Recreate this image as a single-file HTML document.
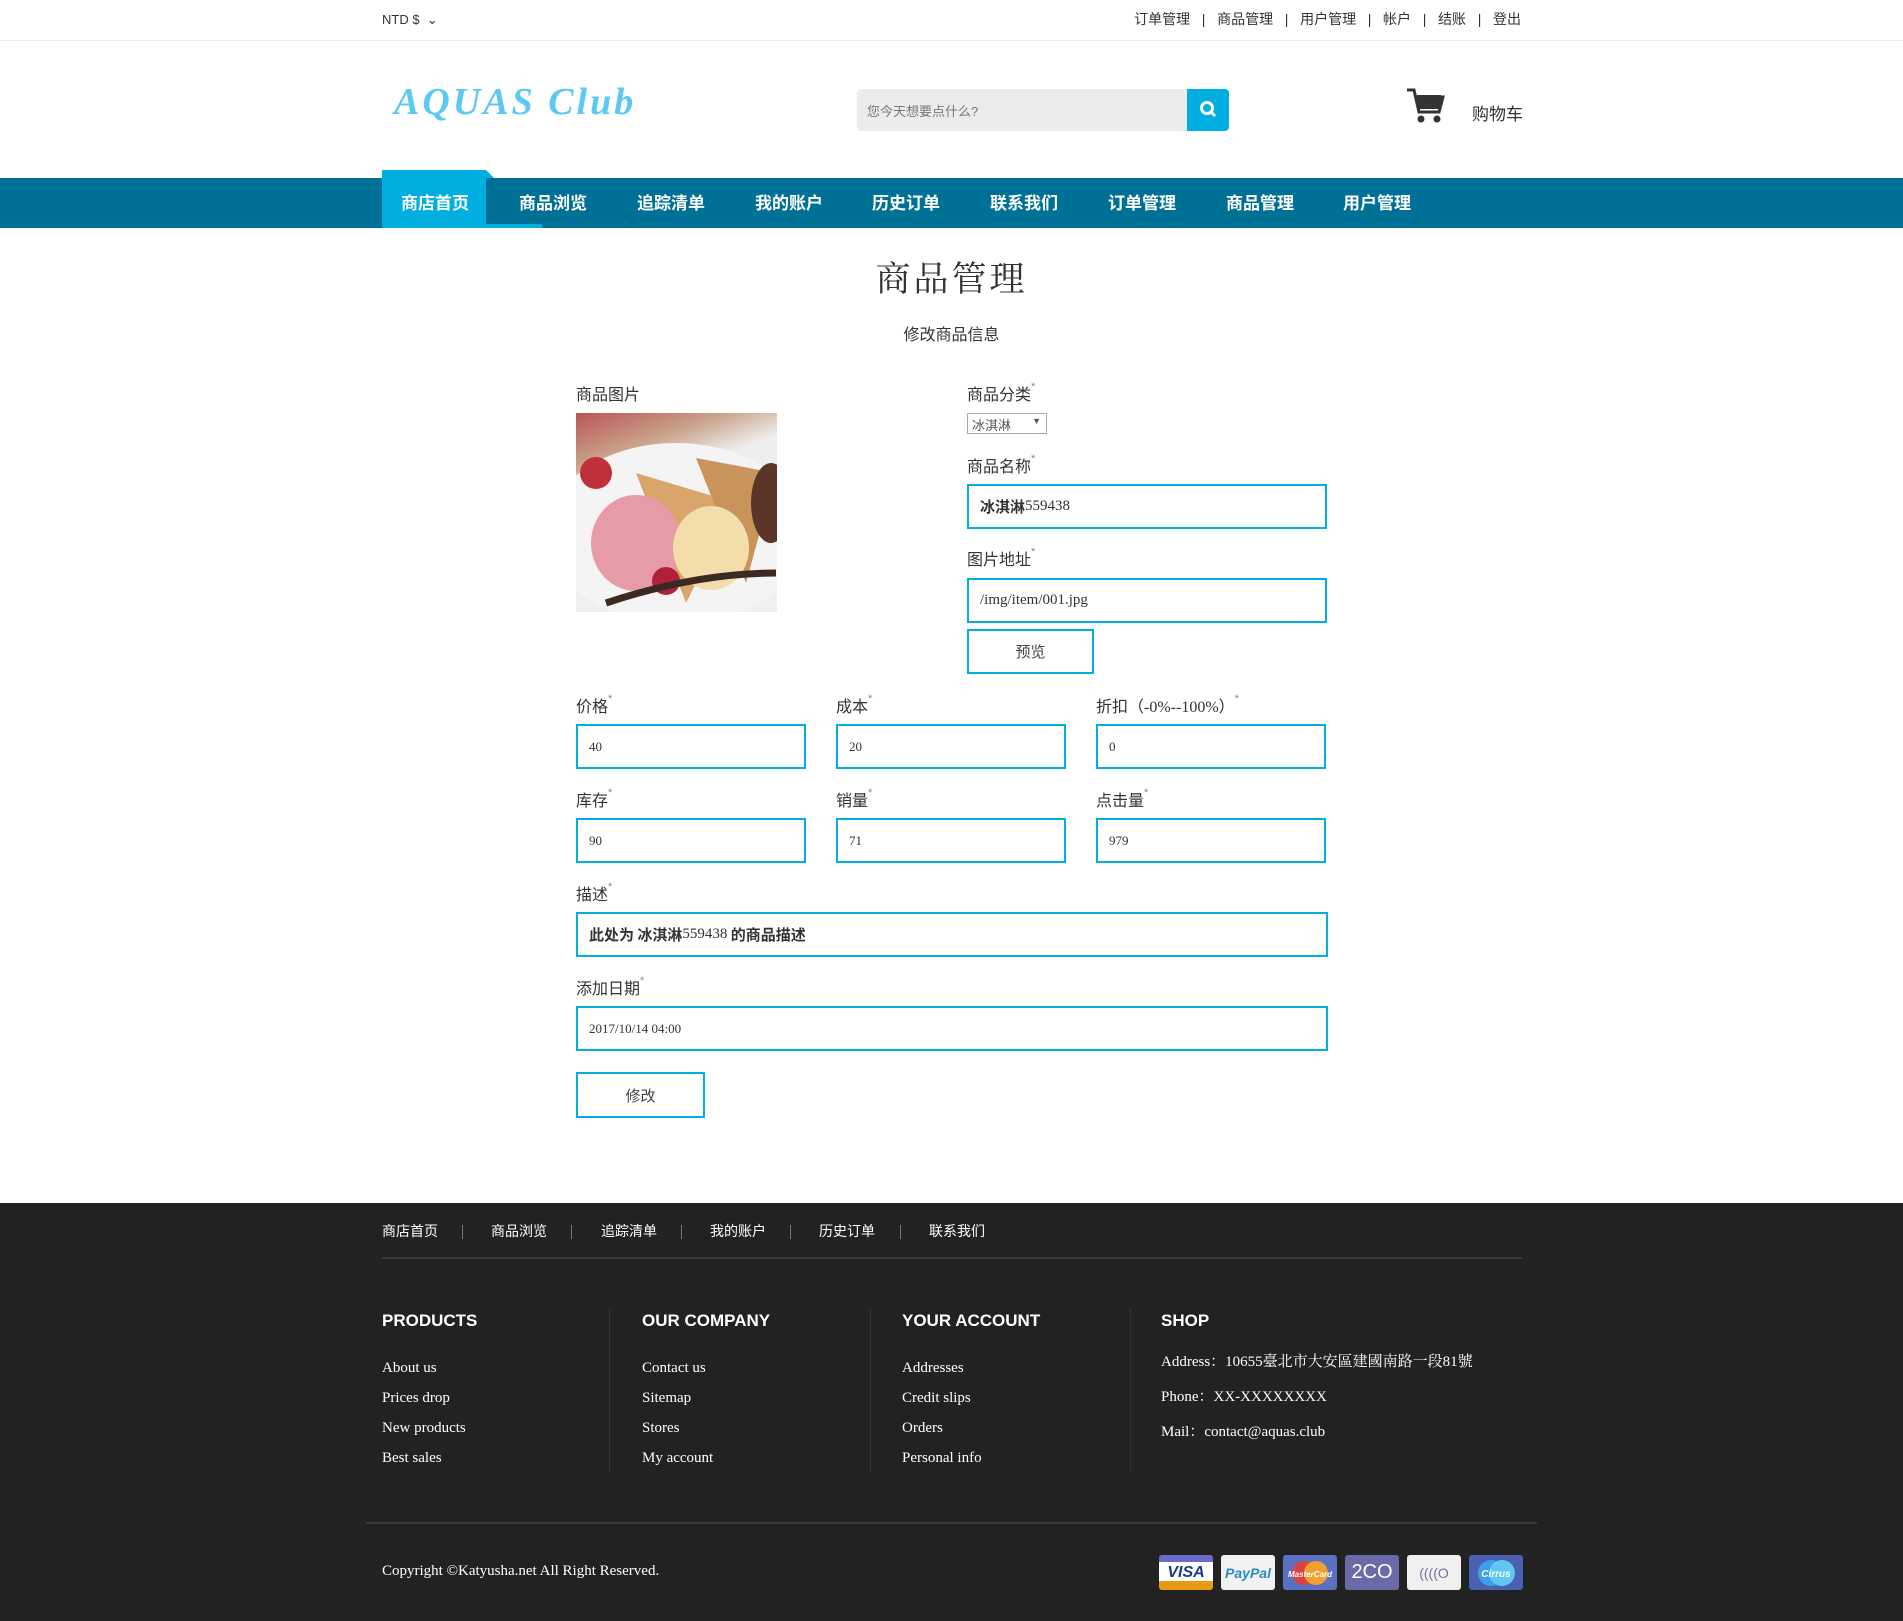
<!DOCTYPE html>
<html><head><meta charset="utf-8">
<style>
*{margin:0;padding:0;box-sizing:border-box}
body{width:1903px;height:1621px;position:relative;background:#fff;font-family:"Liberation Sans","Noto Sans CJK SC",sans-serif;color:#333;overflow:hidden}
.a{position:absolute;white-space:nowrap}
.top{font-size:14px;color:#333}
.nav{font-size:17px;color:#fff;font-weight:bold}
.lbl{font-size:16px;color:#333}
.lbl i{font-style:normal;color:#888;font-size:11px;vertical-align:top}
.inp{position:absolute;border:2px solid #00aee0;background:#fff;font-family:"Liberation Serif","Noto Serif CJK SC",serif;font-size:15px;color:#333;padding-left:11px;display:flex;align-items:center}
.btn{position:absolute;border:2px solid #00aee0;background:#fff;font-size:15px;color:#444;display:flex;align-items:center;justify-content:center}
.fn{font-size:14px;color:#fff}
.fh{font-size:17px;color:#fff;font-weight:bold}
.fl{font-family:"Liberation Serif","Noto Serif CJK SC",serif;font-size:15px;color:#fff}
.vl{position:absolute;width:1px;background:#333;top:1308px;height:164px}
.pc{position:absolute;top:1555px;width:54px;height:35px;border-radius:3px;font-weight:bold;font-style:italic;display:flex;align-items:center;justify-content:center;font-size:16px}
</style></head><body>
<div class="a top" style="left:382px;top:12px;font-size:13px">NTD $ &nbsp;⌄</div>
<div class="a top" style="right:382px;top:9px">订单管理 &nbsp;&nbsp;| &nbsp;&nbsp;商品管理 &nbsp;&nbsp;| &nbsp;&nbsp;用户管理 &nbsp;&nbsp;| &nbsp;&nbsp;帐户 &nbsp;&nbsp;| &nbsp;&nbsp;结账 &nbsp;&nbsp;| &nbsp;&nbsp;登出</div>
<div class="a" style="left:0;top:40px;width:1903px;height:1px;background:#eee"></div>
<div class="a" style="left:394px;top:80px;font-family:'Liberation Serif',serif;font-style:italic;font-weight:bold;font-size:38px;color:#5ec8f5;letter-spacing:3px">AQUAS Club</div>
<div class="a" style="left:857px;top:89px;width:330px;height:42px;background:#ececec;border-radius:4px 0 0 4px;font-size:13px;color:#777;padding:12px 10px">您今天想要点什么?</div>
<div class="a" style="left:1187px;top:89px;width:42px;height:42px;background:#00aee0;border-radius:0 4px 4px 0">
<svg width="42" height="42"><circle cx="20" cy="19" r="5.5" stroke="#fff" stroke-width="3" fill="none"/><line x1="24" y1="23" x2="28" y2="27" stroke="#fff" stroke-width="3"/></svg></div>
<svg class="a" style="left:1405px;top:87px" width="40" height="38"><path d="M2 3h7l5 22h20l4-15H12" fill="none" stroke="#333" stroke-width="3"/><rect x="12" y="8" width="24" height="14" fill="#333"/><circle cx="16" cy="32" r="3.5" fill="#333"/><circle cx="32" cy="32" r="3.5" fill="#333"/></svg>
<div class="a" style="left:1472px;top:100px;font-size:17px;color:#333">购物车</div>
<div class="a" style="left:0;top:178px;width:1903px;height:50px;background:#007196"></div>
<div class="a" style="left:382px;top:170px;width:104px;height:58px;background:#00aee0"></div>
<div class="a" style="left:486px;top:170px;width:8px;height:8px;background:#00aee0;clip-path:polygon(0 0,0 100%,100% 100%)"></div>
<div class="a" style="left:486px;top:224px;width:56px;height:4px;background:#00aee0"></div>
<div class="a nav" style="left:401px;top:189px">商店首页</div>
<div class="a nav" style="left:519px;top:189px">商品浏览</div>
<div class="a nav" style="left:637px;top:189px">追踪清单</div>
<div class="a nav" style="left:755px;top:189px">我的账户</div>
<div class="a nav" style="left:872px;top:189px">历史订单</div>
<div class="a nav" style="left:990px;top:189px">联系我们</div>
<div class="a nav" style="left:1108px;top:189px">订单管理</div>
<div class="a nav" style="left:1226px;top:189px">商品管理</div>
<div class="a nav" style="left:1343px;top:189px">用户管理</div>
<div class="a" style="left:0;width:1903px;text-align:center;top:252px;font-size:35px;color:#333;font-family:'Noto Serif CJK SC',serif;letter-spacing:3px">商品管理</div>
<div class="a" style="left:0;width:1903px;text-align:center;top:321px;font-size:16px;color:#333">修改商品信息</div>
<div class="a lbl" style="left:576px;top:381px">商品图片</div>
<div class="a" style="left:576px;top:413px;width:201px;height:199px;overflow:hidden;background:linear-gradient(160deg,#b55 0%,#c9a38a 20%,#eee 35%,#f0f0f0 100%)">
<svg width="201" height="199"><ellipse cx="100" cy="120" rx="130" ry="90" fill="#f4f4f4"/><polygon points="60,60 160,90 110,190" fill="#d9a56a"/><polygon points="120,45 200,60 170,170" fill="#c9945a"/><ellipse cx="60" cy="130" rx="45" ry="48" fill="#e79aa8"/><ellipse cx="135" cy="135" rx="38" ry="42" fill="#f3ddaa"/><ellipse cx="195" cy="90" rx="20" ry="40" fill="#5a3528"/><circle cx="20" cy="60" r="16" fill="#c0303a"/><circle cx="90" cy="168" r="14" fill="#b0203a"/><path d="M30 190 Q120 160 200 160" stroke="#3a2a22" stroke-width="7" fill="none"/></svg></div>
<div class="a lbl" style="left:967px;top:381px">商品分类<i>*</i></div>
<div class="a" style="left:967px;top:413px;width:80px;height:21px;border:1px solid #aaa;font-size:13px;color:#555;padding:1px 4px">冰淇淋<span style="position:absolute;right:5px;top:2px;font-size:9px">▼</span></div>
<div class="a lbl" style="left:967px;top:453px">商品名称<i>*</i></div>
<div class="inp" style="left:967px;top:484px;width:360px;height:45px"><b style="font-family:'Noto Sans CJK SC',sans-serif;font-size:15px">冰淇淋</b>559438</div>
<div class="a lbl" style="left:967px;top:546px">图片地址<i>*</i></div>
<div class="inp" style="left:967px;top:578px;width:360px;height:45px">/img/item/001.jpg</div>
<div class="btn" style="left:967px;top:629px;width:127px;height:45px">预览</div>
<div class="a lbl" style="left:576px;top:693px">价格<i>*</i></div>
<div class="a lbl" style="left:836px;top:693px">成本<i>*</i></div>
<div class="a lbl" style="left:1096px;top:693px">折扣（<span style="font-family:'Liberation Serif',serif">-0%--100%</span>）<i>*</i></div>
<div class="inp" style="left:576px;top:724px;width:230px;height:45px;font-size:13px">40</div>
<div class="inp" style="left:836px;top:724px;width:230px;height:45px;font-size:13px">20</div>
<div class="inp" style="left:1096px;top:724px;width:230px;height:45px;font-size:13px">0</div>
<div class="a lbl" style="left:576px;top:787px">库存<i>*</i></div>
<div class="a lbl" style="left:836px;top:787px">销量<i>*</i></div>
<div class="a lbl" style="left:1096px;top:787px">点击量<i>*</i></div>
<div class="inp" style="left:576px;top:818px;width:230px;height:45px;font-size:13px">90</div>
<div class="inp" style="left:836px;top:818px;width:230px;height:45px;font-size:13px">71</div>
<div class="inp" style="left:1096px;top:818px;width:230px;height:45px;font-size:13px">979</div>
<div class="a lbl" style="left:576px;top:881px">描述<i>*</i></div>
<div class="inp" style="left:576px;top:912px;width:752px;height:45px"><b style="font-family:'Noto Sans CJK SC',sans-serif;font-size:15px">此处为 冰淇淋</b>559438 <b style="font-family:'Noto Sans CJK SC',sans-serif;font-size:15px">&nbsp;的商品描述</b></div>
<div class="a lbl" style="left:576px;top:975px">添加日期<i>*</i></div>
<div class="inp" style="left:576px;top:1006px;width:752px;height:45px;font-size:13px">2017/10/14 04:00</div>
<div class="btn" style="left:576px;top:1072px;width:129px;height:46px">修改</div>
<div class="a" style="left:0;top:1203px;width:1903px;height:418px;background:#222"></div>
<div class="a fn" style="left:382px;top:1221px">商店首页</div>
<div class="a fn" style="left:491px;top:1221px">商品浏览</div>
<div class="a fn" style="left:601px;top:1221px">追踪清单</div>
<div class="a fn" style="left:710px;top:1221px">我的账户</div>
<div class="a fn" style="left:819px;top:1221px">历史订单</div>
<div class="a fn" style="left:929px;top:1221px">联系我们</div>
<div class="a" style="left:462px;top:1225px;width:1px;height:14px;background:#777"></div>
<div class="a" style="left:571px;top:1225px;width:1px;height:14px;background:#777"></div>
<div class="a" style="left:681px;top:1225px;width:1px;height:14px;background:#777"></div>
<div class="a" style="left:790px;top:1225px;width:1px;height:14px;background:#777"></div>
<div class="a" style="left:900px;top:1225px;width:1px;height:14px;background:#777"></div>
<div class="a" style="left:382px;top:1257px;width:1140px;height:2px;background:#3a3a3a"></div>
<div class="vl" style="left:609px"></div><div class="vl" style="left:870px"></div><div class="vl" style="left:1130px"></div>
<div class="a fh" style="left:382px;top:1311px">PRODUCTS</div>
<div class="a fh" style="left:642px;top:1311px">OUR COMPANY</div>
<div class="a fh" style="left:902px;top:1311px">YOUR ACCOUNT</div>
<div class="a fh" style="left:1161px;top:1311px">SHOP</div>
<div class="a fl" style="left:382px;top:1353px;line-height:30px">About us<br>Prices drop<br>New products<br>Best sales</div>
<div class="a fl" style="left:642px;top:1353px;line-height:30px">Contact us<br>Sitemap<br>Stores<br>My account</div>
<div class="a fl" style="left:902px;top:1353px;line-height:30px">Addresses<br>Credit slips<br>Orders<br>Personal info</div>
<div class="a fl" style="left:1161px;top:1345px;line-height:35px">Address：10655臺北市大安區建國南路一段81號<br>Phone：XX-XXXXXXXX<br>Mail：contact@aquas.club</div>
<div class="a" style="left:366px;top:1522px;width:1171px;height:2px;background:#3a3a3a"></div>
<div class="a fl" style="left:382px;top:1563px">Copyright ©Katyusha.net All Right Reserved.</div>
<div class="pc" style="left:1159px;background:linear-gradient(#6a6acc 0 20%,#fff 20% 75%,#e89a10 75%);color:#1a3a8a">VISA</div>
<div class="pc" style="left:1221px;background:#f2f2f2;color:#2a8ac0;font-size:14px">PayPal</div>
<div class="pc" style="left:1283px;background:#5a70c0"><svg width="44" height="30"><circle cx="16" cy="15" r="12" fill="#e04040"/><circle cx="28" cy="15" r="12" fill="#f0a030"/><text x="22" y="19" font-size="8" fill="#fff" text-anchor="middle" font-family="Liberation Sans">MasterCard</text></svg></div>
<div class="pc" style="left:1345px;background:#6a6aa8;color:#fff;font-style:normal;font-weight:normal;font-size:20px">2CO</div>
<div class="pc" style="left:1407px;background:#f0f0f0;color:#7070a0;font-style:normal;font-size:14px;font-weight:normal">((((O</div>
<div class="pc" style="left:1469px;background:#4a60b0"><svg width="44" height="30"><circle cx="17" cy="15" r="13" fill="#3aa0e8"/><circle cx="28" cy="15" r="13" fill="#60c8f0"/><text x="22" y="19" font-size="10" fill="#fff" text-anchor="middle" font-weight="bold" font-style="italic" font-family="Liberation Sans">Cirrus</text></svg></div>
</body></html>
